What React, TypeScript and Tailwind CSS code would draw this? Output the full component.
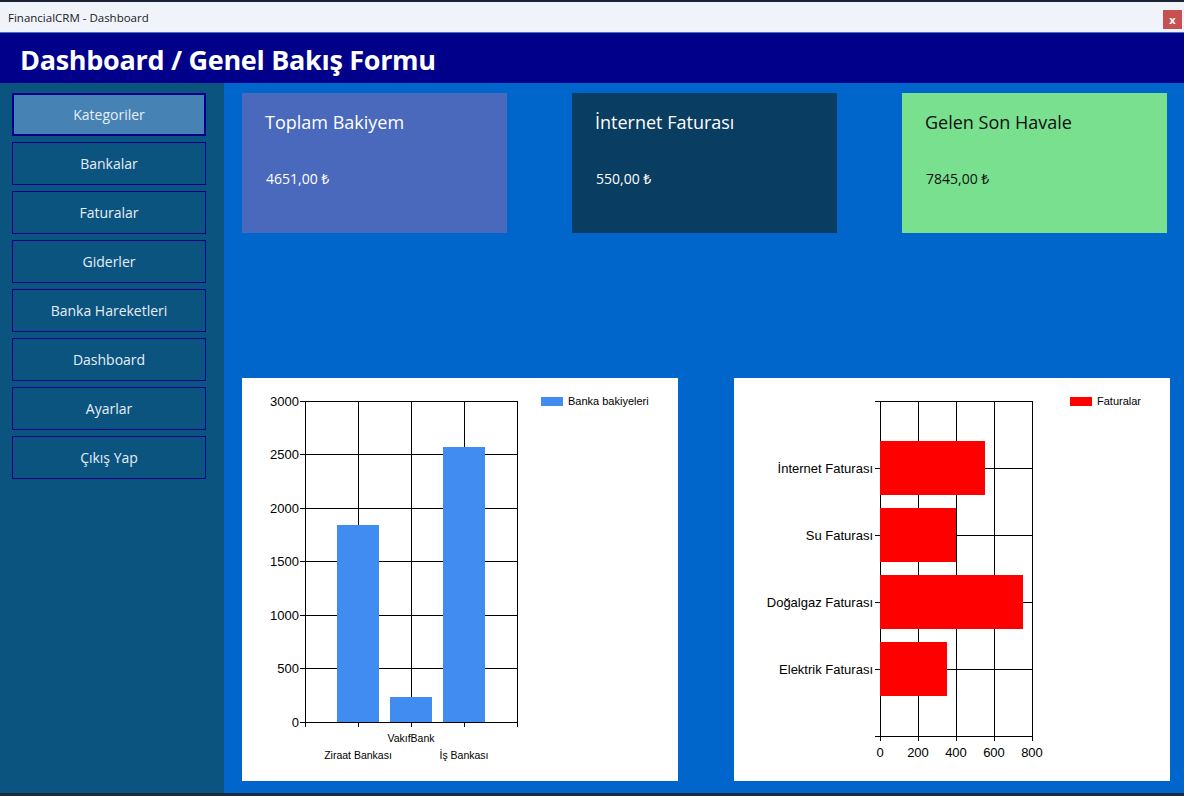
import React from 'react'

const menuItems = ['Kategoriler', 'Bankalar', 'Faturalar', 'Giderler', 'Banka Hareketleri', 'Dashboard', 'Ayarlar', 'Çıkış Yap']

const uiFont = '[font-family:"Segoe_UI","Open_Sans","Noto_Sans",sans-serif]'

type Card = { title: string; value: string; className: string }

const cards: Card[] = [
  { title: 'Toplam Bakiyem', value: '4651,00 ₺', className: 'bg-[#4a69bd] text-white' },
  { title: 'İnternet Faturası', value: '550,00 ₺', className: 'bg-[#0a3d62] text-white' },
  { title: 'Gelen Son Havale', value: '7845,00 ₺', className: 'bg-[#78e08f] text-[#111]' },
]

const chartFont = { fontFamily: '"Liberation Sans", Arial, sans-serif' }

function BankChart(): JSX.Element {
  const left = 63
  const right = 275
  const top = 23
  const bottom = 344
  const step = (bottom - top) / 6
  const yLabels = ['3000', '2500', '2000', '1500', '1000', '500', '0']
  const xs = [63, 116, 169, 222, 275]
  const bars = [
    { x: 95, value: 1841 },
    { x: 148, value: 230 },
    { x: 201, value: 2570 },
  ]
  const scale = (bottom - top) / 3000
  return (
    <svg width="436" height="403" viewBox="0 0 436 403" style={chartFont} shapeRendering="crispEdges">
      {yLabels.map((label, i) => {
        const y = top + step * i
        return (
          <g key={label}>
            <line x1={left} x2={right} y1={y} y2={y} stroke="#000" />
            <line x1={left - 5} x2={left} y1={y} y2={y} stroke="#000" />
            <text x={left - 6} y={y + 4.5} fontSize="13" textAnchor="end" fill="#000">{label}</text>
          </g>
        )
      })}
      {xs.map((x) => (
        <line key={x} x1={x} x2={x} y1={top} y2={bottom + 5} stroke="#000" />
      ))}
      {bars.map((bar) => (
        <rect key={bar.x} x={bar.x} y={bottom - bar.value * scale} width="42" height={bar.value * scale} fill="#418cf0" />
      ))}
      <text x="169" y="364" fontSize="10.5" textAnchor="middle" fill="#000">VakıfBank</text>
      <text x="116" y="381" fontSize="10.5" textAnchor="middle" fill="#000">Ziraat Bankası</text>
      <text x="222" y="381" fontSize="10.5" textAnchor="middle" fill="#000">İş Bankası</text>
      <rect x="299" y="19" width="22" height="9" fill="#418cf0" />
      <text x="326" y="27" fontSize="11" fill="#000">Banka bakiyeleri</text>
    </svg>
  )
}

function BillChart(): JSX.Element {
  const left = 146
  const right = 298
  const top = 23
  const bottom = 358
  const ys = [23, 90, 157, 224, 291, 358]
  const xs = [146, 184, 222, 260, 298]
  const scale = (right - left) / 800
  const bills = [
    { label: 'İnternet Faturası', y: 90, value: 550 },
    { label: 'Su Faturası', y: 157, value: 400 },
    { label: 'Doğalgaz Faturası', y: 224, value: 750 },
    { label: 'Elektrik Faturası', y: 291, value: 350 },
  ]
  return (
    <svg width="436" height="403" viewBox="0 0 436 403" style={chartFont} shapeRendering="crispEdges">
      {ys.map((y) => (
        <g key={y}>
          <line x1={left} x2={right} y1={y} y2={y} stroke="#000" />
          <line x1={left - 5} x2={left} y1={y} y2={y} stroke="#000" />
        </g>
      ))}
      {xs.map((x, i) => (
        <g key={x}>
          <line x1={x} x2={x} y1={top} y2={bottom + 5} stroke="#000" />
          <text x={x} y="379" fontSize="13" textAnchor="middle" fill="#000">{i * 200}</text>
        </g>
      ))}
      {bills.map((bill) => (
        <g key={bill.label}>
          <rect x={left} y={bill.y - 27} width={bill.value * scale} height="54" fill="#ff0000" />
          <text x={left - 7} y={bill.y + 4.5} fontSize="13" textAnchor="end" fill="#000">{bill.label}</text>
        </g>
      ))}
      <rect x="336" y="19" width="22" height="9" fill="#ff0000" />
      <text x="363" y="27" fontSize="11" fill="#000">Faturalar</text>
    </svg>
  )
}

export default function App(): JSX.Element {
  return (
    <div className={`flex h-[796px] w-[1184px] flex-col overflow-hidden bg-[#0066cc] ${uiFont}`}>
      <div className="h-[2px] shrink-0 bg-[#1c2433]" />
      <div className="flex h-[30px] shrink-0 items-center justify-between bg-[#f0f3fa] pl-2 pr-[2px]">
        <span className="pt-[2px] text-[11.5px] text-[#1a1a1a]">FinancialCRM - Dashboard</span>
        <button type="button" className="mt-[4px] grid h-[19px] w-[19px] place-items-center bg-[#c75050] text-[11px] font-bold leading-none text-white">
          x
        </button>
      </div>
      <div className="h-[1px] shrink-0 bg-[#3377cc]" />
      <header className="flex h-[50px] shrink-0 items-center bg-[#00008b] pl-[20px] pt-[2px]">
        <h1 className="text-[27px] font-bold leading-none tracking-[-0.3px] text-white">Dashboard / Genel Bakış Formu</h1>
      </header>
      <div className="flex min-h-0 flex-1">
        <nav className="flex w-[224px] shrink-0 flex-col gap-[6px] bg-[#0c5480] pl-[12px] pt-[10px]">
          {menuItems.map((item, i) => (
            <button
              key={item}
              type="button"
              className={
                i === 0
                  ? 'h-[43px] w-[194px] shrink-0 border-2 border-[#00008b] bg-[#4682b4] text-[14px] text-[#e6eef6]'
                  : 'h-[43px] w-[194px] shrink-0 border border-[#00008b] bg-transparent text-[14px] text-[#e6eef6]'
              }
            >
              {item}
            </button>
          ))}
        </nav>
        <main className="flex flex-1 flex-col pl-[18px] pt-[10px]">
          <div className="flex gap-[65px]">
            {cards.map((card) => (
              <div key={card.title} className={`flex h-[140px] w-[265px] flex-col pl-[23px] pt-[16px] ${card.className}`}>
                <span className="text-[18px] leading-[27px]">{card.title}</span>
                <span className="mt-[33px] pl-[1px] text-[14px] leading-[20px]">{card.value}</span>
              </div>
            ))}
          </div>
          <div className="mt-[145px] flex gap-[56px]">
            <div className="h-[403px] w-[436px] bg-white">
              <BankChart />
            </div>
            <div className="h-[403px] w-[436px] bg-white">
              <BillChart />
            </div>
          </div>
        </main>
      </div>
      <div className="h-[3px] shrink-0 bg-[#1c2a3e]" />
    </div>
  )
}
